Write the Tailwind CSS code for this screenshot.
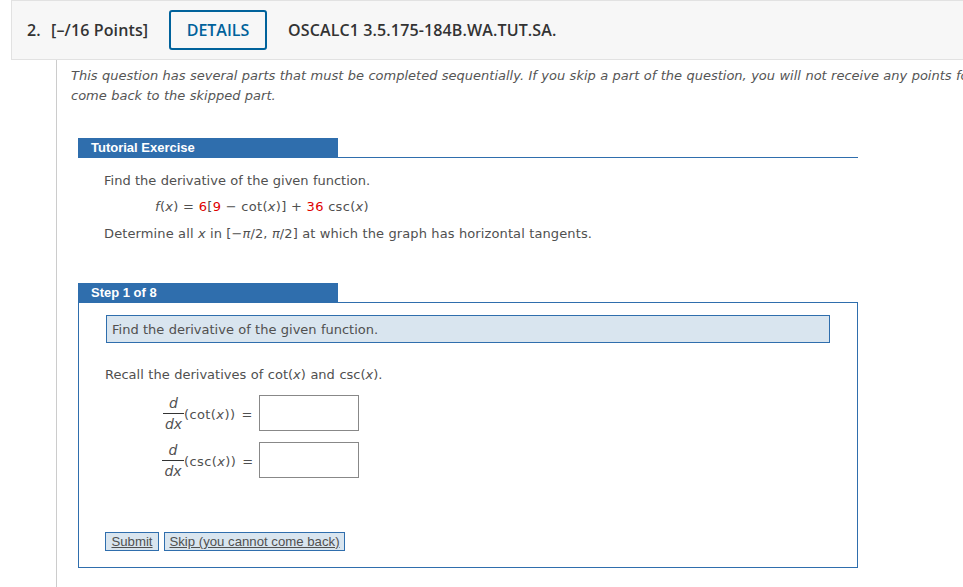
<!DOCTYPE html>
<html><head><meta charset="utf-8"><script src="https://cdn.jsdelivr.net/npm/@tailwindcss/browser@4"></script></head>
<body class="w-[963px] h-[587px] overflow-hidden bg-white text-[#505050] font-['DejaVu_Sans',sans-serif] text-[13px]">
<div class="ml-[11px] w-[960px] h-[60px] bg-[#f7f7f7] border border-[#e2e2e2] flex items-center font-['Open_Sans',sans-serif] font-semibold text-[16px] text-[#333] tracking-[0.13px]">
  <span class="ml-[15px] w-[24px]">2.</span>
  <span class="w-[118px]">[–/16 Points]</span>
  <span class="w-[98px] h-[40px] border-2 border-[#00629b] rounded-[3px] flex items-center justify-center text-[#00629b] tracking-normal">DETAILS</span>
  <span class="ml-[21px]">OSCALC1 3.5.175-184B.WA.TUT.SA.</span>
</div>
<div class="ml-[56px] w-[907px] h-[527px] border-l border-[#ccc] overflow-hidden">
  <p class="ml-[14px] mt-[6px] w-[1000px] italic leading-[20px] text-[#555] [word-spacing:0.3px]">This question has several parts that must be completed sequentially. If you skip a part of the question, you will not receive any points for<br>come back to the skipped part.</p>
  <section class="ml-[21px] w-[780px] mt-[32px]">
    <div class="border-b border-[#2f6ead] h-[20px]"><div class="w-[260px] h-[20px] bg-[#2f6ead] text-white font-['Liberation_Sans',sans-serif] font-bold text-[13px] leading-[19px] pl-[13px]">Tutorial Exercise</div></div>
    <p class="ml-[26px] mt-[15px] leading-[16px] [word-spacing:0.2px]">Find the derivative of the given function.</p>
    <p class="ml-[77px] mt-[10px] leading-[16px] tracking-[0.3px]"><i>f</i>(<i>x</i>) = <span class="text-[#e00000]">6</span>[<span class="text-[#e00000]">9</span> − cot(<i>x</i>)] + <span class="text-[#e00000]">36</span> csc(<i>x</i>)</p>
    <p class="ml-[26px] mt-[11px] leading-[16px] tracking-[0.12px]">Determine all <i>x</i> in [−<i>π</i>/2, <i>π</i>/2] at which the graph has horizontal tangents.</p>
  </section>
  <section class="ml-[21px] w-[780px] mt-[41px]">
    <div class="w-[260px] h-[20px] bg-[#2f6ead] text-white font-['Liberation_Sans',sans-serif] font-bold text-[13px] leading-[19px] pl-[13px]">Step 1 of 8</div>
    <div class="h-[266px] border border-[#2f6ead] -mt-px">
      <div class="ml-[27px] mt-[12px] w-[724px] h-[28px] bg-[#d9e5ef] border border-[#2f6ead] pl-[5px] leading-[27px] [word-spacing:0.2px]">Find the derivative of the given function.</div>
      <p class="ml-[26px] mt-[24px] leading-[16px] [word-spacing:0.4px]">Recall the derivatives of cot(<i>x</i>) and csc(<i>x</i>).</p>
      <div class="mt-[12px] flex items-center h-[36px]">
        <div class="ml-[84px] w-[96px] flex items-center justify-start">
          <span class="inline-flex flex-col items-center w-[21px] text-[14px]"><i class="h-[19px] leading-[19px]">d</i><i class="w-[21px] border-t border-[#333] h-[19px] leading-[20px] text-center">dx</i></span><span class="tracking-[0.4px] mt-[3px]">(cot(<i>x</i>))</span><span class="ml-[6px] mt-[3px]">=</span>
        </div>
        <div class="w-[100px] h-[36px] border border-[#888] bg-white"></div>
      </div>
      <div class="mt-[11px] flex items-center h-[36px]">
        <div class="ml-[83px] w-[97px] flex items-center justify-start">
          <span class="inline-flex flex-col items-center w-[22px] text-[14px]"><i class="h-[19px] leading-[19px]">d</i><i class="w-[22px] border-t border-[#333] h-[19px] leading-[20px] text-center">dx</i></span><span class="tracking-[0.4px] mt-[3px]">(csc(<i>x</i>))</span><span class="ml-[6px] mt-[3px]">=</span>
        </div>
        <div class="w-[100px] h-[36px] border border-[#888] bg-white"></div>
      </div>
      <div class="ml-[26px] mt-[54px] flex gap-[5px] font-['Liberation_Sans',sans-serif] text-[13.2px] underline whitespace-nowrap">
        <span class="w-[54px] h-[19px] bg-[#d9e5ef] border border-[#2f6ead] text-center leading-[17px]">Submit</span>
        <span class="w-[181px] h-[19px] bg-[#d9e5ef] border border-[#2f6ead] text-center leading-[17px]">Skip (you cannot come back)</span>
      </div>
    </div>
  </section>
</div>
</body></html>
